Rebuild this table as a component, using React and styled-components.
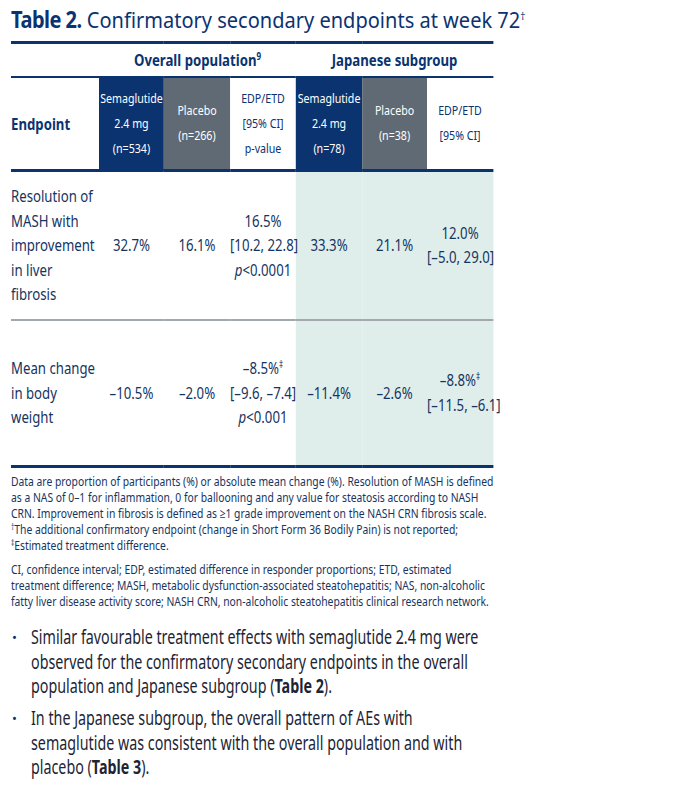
import React from "react";
import styled, { createGlobalStyle } from "styled-components";

const NAVY = "#0b3370";
const GREY = "#5f6a74";
const TEAL = "#e0eeeb";
const INK = "#15345f";

const GlobalStyle = createGlobalStyle`
  body {
    margin: 0;
    background: #fff;
    font-family: "Noto Sans", "Open Sans", sans-serif;
    color: ${INK};
  }
`;

const Page = styled.div`
  width: 673px;
  height: 788px;
  padding: 4px 0 0 11px;
  box-sizing: border-box;
  overflow: hidden;
`;

/* the source face is a condensed sans; no condensed face is installed,
   so text blocks are narrowed horizontally */
const Narrow = styled.span`
  display: inline-block;
  white-space: nowrap;
  transform: scaleX(${(p) => p.$k});
  transform-origin: left top;
`;

const Title = styled.h2`
  margin: 0;
  font-size: 22.5px;
  line-height: 32px;
  font-weight: 400;
  color: ${NAVY};

  & b {
    font-weight: 700;
    letter-spacing: -0.6px;
  }
  & sup {
    font-size: 11px;
    line-height: 0;
  }
`;

const TableFrame = styled.div`
  width: 602.5px;
  margin-top: 5px;
  transform: scaleX(0.8);
  transform-origin: left top;
`;

const Table = styled.table`
  width: 602.5px;
  border-collapse: collapse;
  table-layout: fixed;
  border-top: 3px solid ${NAVY};
  border-bottom: 3px solid ${NAVY};
  white-space: nowrap;
`;

const GroupRow = styled.tr`
  height: 34px;
  border-bottom: 2px solid ${NAVY};
`;

const GroupCell = styled.th`
  padding: 0;
  font-size: 16.5px;
  font-weight: 700;
  color: ${NAVY};
  text-align: center;

  & sup {
    font-size: 10px;
    line-height: 0;
  }
`;

const HeadRow = styled.tr`
  height: 94px;
  border-bottom: 3px solid ${NAVY};
`;

const HeadCell = styled.th`
  padding: 0;
  font-size: 13.3px;
  line-height: 25px;
  font-weight: 400;
  text-align: center;
  vertical-align: middle;
  background: ${(p) =>
    p.$tone === "navy" ? NAVY : p.$tone === "grey" ? GREY : "#fff"};
  color: ${(p) => (p.$tone === "white" ? NAVY : "#fff")};
`;

const EndpointHead = styled.th`
  padding: 0;
  text-align: left;
  font-size: 16.5px;
  font-weight: 700;
  color: ${NAVY};
`;

const DataRow = styled.tr`
  height: ${(p) => p.$h}px;
  border-bottom: ${(p) => (p.$last ? "none" : "2px solid #a3a8ad")};
`;

const Cell = styled.td`
  padding: 0;
  font-size: 16.5px;
  line-height: 24.5px;
  text-align: ${(p) => (p.$left ? "left" : "center")};
  vertical-align: middle;
  background: ${(p) => (p.$jp ? TEAL : "transparent")};
  color: ${INK};

  & sup {
    font-size: 10px;
    line-height: 0;
  }
`;

const Notes = styled.div`
  margin-top: 5px;
  font-size: 13px;
  line-height: 16px;
  color: ${INK};

  & p {
    margin: 0 0 8px;
  }
  & p:last-child {
    margin-bottom: 0;
  }
  & sup {
    font-size: 8px;
    line-height: 0;
    vertical-align: 4px;
  }
`;

const Bullets = styled.ul`
  list-style: none;
  margin: 16px 0 0;
  padding: 0;
`;

const Bullet = styled.li`
  display: flex;
  margin-bottom: 7.5px;
  font-size: 19px;
  line-height: 24.5px;
  color: #1d2535;

  &::before {
    content: "•";
    width: 20px;
    flex: none;
    padding-left: 1px;
    box-sizing: border-box;
    color: ${NAVY};
    font-size: 13px;
  }
  & b {
    font-weight: 700;
  }
`;

const cols = [110, 81.25, 82.5, 82.5, 82.5, 81.25, 82.5];

const rows = [
  {
    h: 149,
    label: ["Resolution of", "MASH with", "improvement", "in liver", "fibrosis"],
    vals: ["32.7%", "16.1%"],
    edp: [<>16.5%</>, <>[10.2, 22.8]</>, <><i>p</i>&lt;0.0001</>],
    jp: ["33.3%", "21.1%"],
    jedp: [<>12.0%</>, <>[–5.0, 29.0]</>],
  },
  {
    h: 147,
    label: ["Mean change", "in body", "weight"],
    vals: ["–10.5%", "–2.0%"],
    edp: [<>–8.5%<sup>‡</sup></>, <>[–9.6, –7.4]</>, <><i>p</i>&lt;0.001</>],
    jp: ["–11.4%", "–2.6%"],
    jedp: [<>–8.8%<sup>‡</sup></>, <>[–11.5, –6.1]</>],
  },
];

const lines = (arr) =>
  arr.map((l, i) => (
    <React.Fragment key={i}>
      {i > 0 && <br />}
      {l}
    </React.Fragment>
  ));

export default function App() {
  return (
    <Page>
      <GlobalStyle />
      <Title>
        <Narrow $k={0.89}>
          <b>Table 2.</b> Confirmatory secondary endpoints at week 72<sup>†</sup>
        </Narrow>
      </Title>

      <TableFrame>
        <Table>
          <colgroup>
            {cols.map((w, i) => (
              <col key={i} style={{ width: w }} />
            ))}
          </colgroup>
          <thead>
            <GroupRow>
              <GroupCell />
              <GroupCell colSpan={3}>
                Overall population<sup>9</sup>
              </GroupCell>
              <GroupCell colSpan={3}>Japanese subgroup</GroupCell>
            </GroupRow>
            <HeadRow>
              <EndpointHead>Endpoint</EndpointHead>
              <HeadCell $tone="navy">{lines(["Semaglutide", "2.4 mg", "(n=534)"])}</HeadCell>
              <HeadCell $tone="grey">{lines(["Placebo", "(n=266)"])}</HeadCell>
              <HeadCell $tone="white">{lines(["EDP/ETD", "[95% CI]", "p-value"])}</HeadCell>
              <HeadCell $tone="navy">{lines(["Semaglutide", "2.4 mg", "(n=78)"])}</HeadCell>
              <HeadCell $tone="grey">{lines(["Placebo", "(n=38)"])}</HeadCell>
              <HeadCell $tone="white">{lines(["EDP/ETD", "[95% CI]"])}</HeadCell>
            </HeadRow>
          </thead>
          <tbody>
            {rows.map((r, i) => (
              <DataRow key={i} $h={r.h} $last={i === rows.length - 1}>
                <Cell $left>{lines(r.label)}</Cell>
                <Cell>{r.vals[0]}</Cell>
                <Cell>{r.vals[1]}</Cell>
                <Cell>{lines(r.edp)}</Cell>
                <Cell $jp>{r.jp[0]}</Cell>
                <Cell $jp>{r.jp[1]}</Cell>
                <Cell $jp>{lines(r.jedp)}</Cell>
              </DataRow>
            ))}
          </tbody>
        </Table>
      </TableFrame>

      <Notes>
        <p>
          <Narrow $k={0.795}>
            Data are proportion of participants (%) or absolute mean change (%). Resolution of MASH is defined
            <br />
            as a NAS of 0–1 for inflammation, 0 for ballooning and any value for steatosis according to NASH
            <br />
            CRN. Improvement in fibrosis is defined as ≥1 grade improvement on the NASH CRN fibrosis scale.
            <br />
            <sup>†</sup>The additional confirmatory endpoint (change in Short Form 36 Bodily Pain) is not reported;
            <br />
            <sup>‡</sup>Estimated treatment difference.
          </Narrow>
        </p>
        <p>
          <Narrow $k={0.795}>
            CI, confidence interval; EDP, estimated difference in responder proportions; ETD, estimated
            <br />
            treatment difference; MASH, metabolic dysfunction-associated steatohepatitis; NAS, non-alcoholic
            <br />
            fatty liver disease activity score; NASH CRN, non-alcoholic steatohepatitis clinical research network.
          </Narrow>
        </p>
      </Notes>

      <Bullets>
        <Bullet>
          <Narrow $k={0.752}>
            Similar favourable treatment effects with semaglutide 2.4 mg were
            <br />
            observed for the confirmatory secondary endpoints in the overall
            <br />
            population and Japanese subgroup (<b>Table 2</b>).
          </Narrow>
        </Bullet>
        <Bullet>
          <Narrow $k={0.752}>
            In the Japanese subgroup, the overall pattern of AEs with
            <br />
            semaglutide was consistent with the overall population and with
            <br />
            placebo (<b>Table 3</b>).
          </Narrow>
        </Bullet>
      </Bullets>
    </Page>
  );
}
